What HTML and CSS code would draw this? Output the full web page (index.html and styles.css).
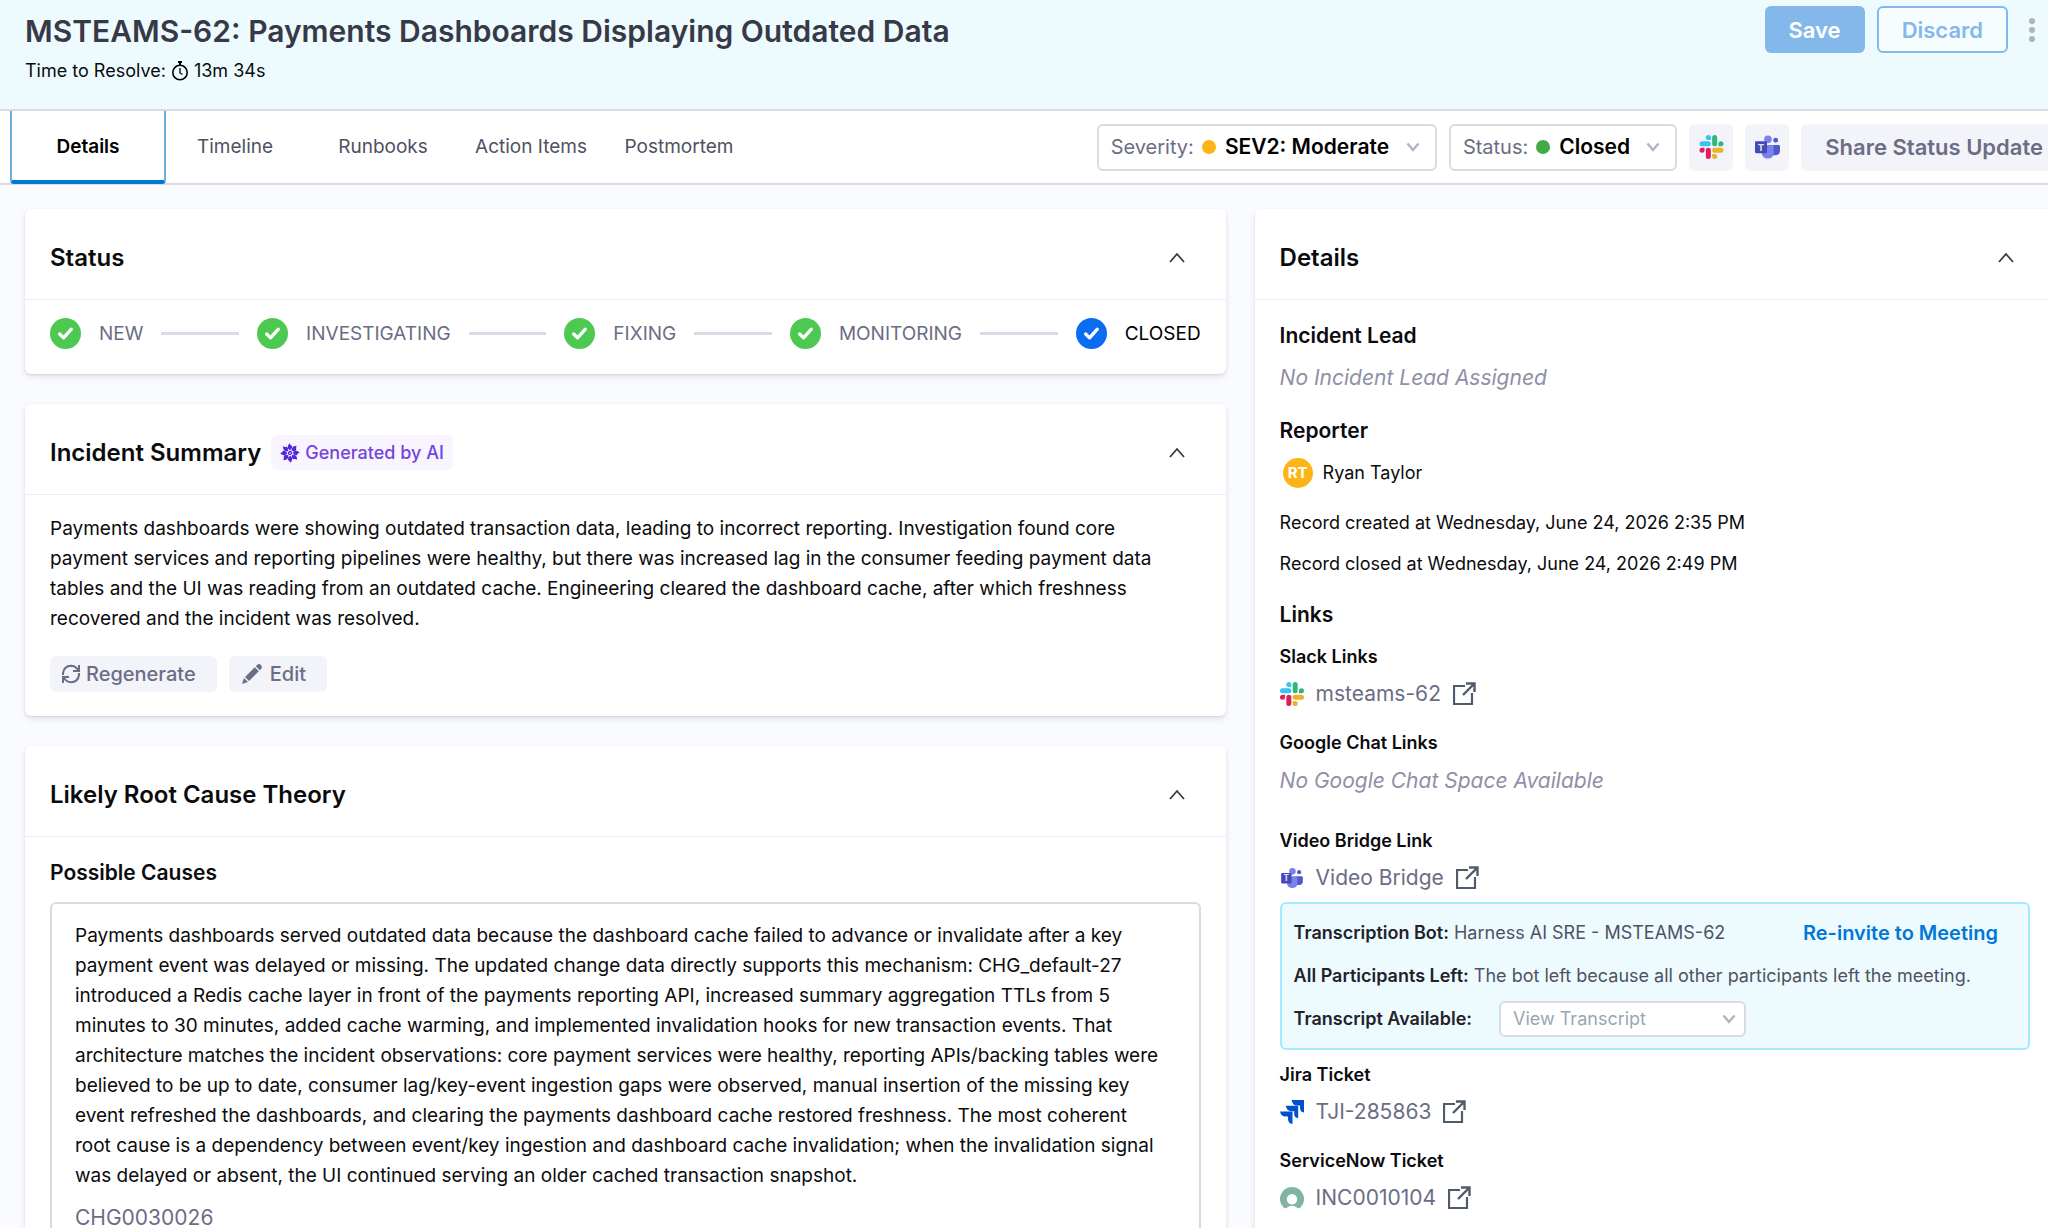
FILE: index.html
```html
<!DOCTYPE html>
<html lang="en">
  <head>
    <meta charset="utf-8" />
    <title>MSTEAMS-62: Payments Dashboards Displaying Outdated Data</title>
    <meta name="viewport" content="width=device-width, initial-scale=1.0" />
    <link rel="stylesheet" href="styles.css">
  </head>

  <body>
    <!-- shared icons -->
    <svg class="sprite" aria-hidden="true">
      <symbol id="chevron-up" viewBox="0 0 18 18">
        <path d="M2 13 9 5l7 8" fill="none" stroke="#383946" stroke-width="1.8" />
      </symbol>
      <symbol id="chevron-down" viewBox="0 0 16 16">
        <path d="M2.500 4.500 8 11l5.500-6.500" fill="none" stroke="#b0b1c4" stroke-width="2.400" />
      </symbol>
      <symbol id="check" viewBox="0 0 32 32">
        <circle cx="16" cy="16" r="16" fill="currentColor" />
        <path d="m10 16.500 4 4 8-9" fill="none" stroke="#fff" stroke-width="3.400" stroke-linecap="round" stroke-linejoin="round" />
      </symbol>
      <symbol id="external" viewBox="0 0 24 24">
        <path d="M12 4H1v18h18V11" fill="none" stroke="#4f5b6b" stroke-width="2.200" />
        <path d="M13 1.500h8.500V10M21 2 10 13" fill="none" stroke="#4f5b6b" stroke-width="2.400" />
      </symbol>
      <symbol id="slack" viewBox="0 0 24 24">
        <path fill="#e01e5a" d="M5.042 15.165a2.528 2.528 0 0 1-2.520 2.523A2.528 2.528 0 0 1 0 15.165a2.527 2.527 0 0 1 2.522-2.520h2.520v2.520zM6.313 15.165a2.527 2.527 0 0 1 2.521-2.520 2.527 2.527 0 0 1 2.521 2.520v6.313A2.528 2.528 0 0 1 8.834 24a2.528 2.528 0 0 1-2.521-2.522v-6.313z" />
        <path fill="#36c5f0" d="M8.834 5.042a2.528 2.528 0 0 1-2.521-2.520A2.528 2.528 0 0 1 8.834 0a2.528 2.528 0 0 1 2.521 2.522v2.520H8.834zM8.834 6.313a2.528 2.528 0 0 1 2.521 2.521 2.528 2.528 0 0 1-2.521 2.521H2.522A2.528 2.528 0 0 1 0 8.834a2.528 2.528 0 0 1 2.522-2.521h6.312z" />
        <path fill="#2eb67d" d="M18.956 8.834a2.528 2.528 0 0 1 2.522-2.521A2.528 2.528 0 0 1 24 8.834a2.528 2.528 0 0 1-2.522 2.521h-2.522V8.834zM17.688 8.834a2.528 2.528 0 0 1-2.523 2.521 2.527 2.527 0 0 1-2.520-2.521V2.522A2.527 2.527 0 0 1 15.165 0a2.528 2.528 0 0 1 2.523 2.522v6.312z" />
        <path fill="#ecb22e" d="M15.165 18.956a2.528 2.528 0 0 1 2.523 2.522A2.528 2.528 0 0 1 15.165 24a2.527 2.527 0 0 1-2.520-2.522v-2.522h2.520zM15.165 17.688a2.527 2.527 0 0 1-2.520-2.523 2.526 2.526 0 0 1 2.520-2.520h6.313A2.527 2.527 0 0 1 24 15.165a2.528 2.528 0 0 1-2.522 2.523h-6.313z" />
      </symbol>
      <symbol id="teams" viewBox="0 0 26 24">
        <circle cx="21.500" cy="5" r="2.500" fill="#5059c9" />
        <path d="M17 10h7.500q1.500 0 1.500 1.500V16q0 4.500-4.500 4.500H17z" fill="#5059c9" />
        <circle cx="13.500" cy="4" r="4" fill="#7b83eb" />
        <path d="M7 10h11q1.500 0 1.500 1.500V18q0 6-6.200 6T7 18z" fill="#7b83eb" />
        <rect y="6" width="12.500" height="12.500" rx="1.200" fill="#444ab5" />
        <text x="6.200" y="16" text-anchor="middle" font-family="Inter, sans-serif" font-size="10" font-weight="700" fill="#dfe1fa">T</text>
      </symbol>
      <symbol id="jira" viewBox="0 0 24 24">
        <path d="M11.500 0H24v12.500q-4-.5-4-4.500V5.500h-3q-4.500 0-5.500-5.500z" fill="#0052cc" />
        <path d="M5.800 5.800h12.400v12.400q-4-.5-4-4.500v-2.500h-3q-4.400 0-5.400-5.400z" fill="#0052cc" />
        <path d="M0 11.500h12.500V24q-4-.5-4.500-4.500V16.500H5.500Q1 16.500 0 11.500z" fill="#0052cc" />
      </symbol>
      <symbol id="servicenow" viewBox="0 0 24 24">
        <path d="M12 1a12 12 0 0 0-8.200 20.700 2 2 0 0 0 2.500.2 9.500 9.500 0 0 1 11.400 0 2 2 0 0 0 2.500-.2A12 12 0 0 0 12 1zm0 17.500a5.200 5.200 0 1 1 0-10.400 5.200 5.200 0 0 1 0 10.400z" fill="#81b5a1" />
      </symbol>
      <symbol id="blade" viewBox="0 0 20 20">
        <path d="M9.200 7.200Q6.200 3.600 9.600.2 10.200 2 12.400 3.600 12.200 5.600 10.400 6.800z" fill="#5426db" />
      </symbol>
    </svg>

    <header class="page-head">
      <div>
        <h1>MSTEAMS-62: Payments Dashboards Displaying Outdated Data</h1>
        <p class="resolve">
          Time to Resolve:
          <svg class="icon-clock" viewBox="0 0 18 20"><path d="M7 1h4M9 1v3" stroke="#000" stroke-width="2" /><circle cx="9" cy="11.500" r="7.200" fill="none" stroke="#000" stroke-width="1.600" /><path d="M9 7v5l2.500 1.500" fill="none" stroke="#000" stroke-width="1.300" /></svg>
          13m 34s
        </p>
      </div>
      <div class="head-actions">
        <button class="btn btn-primary">Save</button>
        <button class="btn btn-outline">Discard</button>
        <button class="btn-more" aria-label="More options">
          <svg viewBox="0 0 6 24"><circle cx="3" cy="3" r="3" /><circle cx="3" cy="12" r="3" /><circle cx="3" cy="21" r="3" /></svg>
        </button>
      </div>
    </header>

    <div class="toolbar">
      <nav class="tabs">
        <a href="#details" class="tab active">Details</a>
        <a href="#timeline" class="tab">Timeline</a>
        <a href="#runbooks" class="tab">Runbooks</a>
        <a href="#action-items" class="tab">Action Items</a>
        <a href="#postmortem" class="tab">Postmortem</a>
      </nav>
      <div class="controls">
        <div class="picker">
          <label for="severity">Severity:</label>
          <span class="dot dot-moderate"></span>
          <select id="severity"><option>SEV2: Moderate</option></select>
          <svg class="caret"><use href="#chevron-down" /></svg>
        </div>
        <div class="picker">
          <label for="status">Status:</label>
          <span class="dot dot-closed"></span>
          <select id="status"><option>Closed</option></select>
          <svg class="caret"><use href="#chevron-down" /></svg>
        </div>
        <button class="btn-icon" aria-label="Slack"><svg><use href="#slack" /></svg></button>
        <button class="btn-icon" aria-label="Teams"><svg><use href="#teams" /></svg></button>
        <button class="btn btn-share">Share Status Update</button>
      </div>
    </div>

    <main class="columns">
      <div class="main-column">
        <section class="card">
          <div class="card-head">
            <h2>Status</h2>
            <button class="toggle" aria-label="Collapse"><svg><use href="#chevron-up" /></svg></button>
          </div>
          <ol class="steps">
            <li><svg class="done"><use href="#check" /></svg>NEW</li>
            <li class="line"></li>
            <li><svg class="done"><use href="#check" /></svg>INVESTIGATING</li>
            <li class="line"></li>
            <li><svg class="done"><use href="#check" /></svg>FIXING</li>
            <li class="line"></li>
            <li><svg class="done"><use href="#check" /></svg>MONITORING</li>
            <li class="line"></li>
            <li class="current"><svg><use href="#check" /></svg>CLOSED</li>
          </ol>
        </section>

        <section class="card">
          <div class="card-head">
            <h2>Incident Summary</h2>
            <span class="ai-badge">
              <svg viewBox="0 0 20 20">
                <circle cx="10" cy="10" r="1.500" fill="none" stroke="#5426db" stroke-width="1.300" />
                <use href="#blade" width="20" height="20" />
                <use href="#blade" width="20" height="20" transform="rotate(45 10 10)" />
                <use href="#blade" width="20" height="20" transform="rotate(90 10 10)" />
                <use href="#blade" width="20" height="20" transform="rotate(135 10 10)" />
                <use href="#blade" width="20" height="20" transform="rotate(180 10 10)" />
                <use href="#blade" width="20" height="20" transform="rotate(225 10 10)" />
                <use href="#blade" width="20" height="20" transform="rotate(270 10 10)" />
                <use href="#blade" width="20" height="20" transform="rotate(315 10 10)" />
              </svg>
              Generated by AI
            </span>
            <button class="toggle" aria-label="Collapse"><svg><use href="#chevron-up" /></svg></button>
          </div>
          <div class="card-body summary">
            <p class="prose">Payments dashboards were showing outdated transaction data, leading to incorrect reporting. Investigation found core payment services and reporting pipelines were healthy, but there was increased lag in the consumer feeding payment data tables and the UI was reading from an outdated cache. Engineering cleared the dashboard cache, after which freshness recovered and the incident was resolved.</p>
            <div class="summary-actions">
              <button class="btn-small">
                <svg viewBox="0 0 20 20" fill="none" stroke="currentColor" stroke-width="2"><path d="M2 11V9q1-7 8-7.200 4.500 0 7.500 4.700M18 1v6h-6M18 9v2q-1 7-8 7.200-4.500 0-7.500-4.700M2 19v-6h6" /></svg>
                Regenerate
              </button>
              <button class="btn-small btn-edit">
                <svg viewBox="0 0 20 20" fill="currentColor"><path d="M0 20l2-6 4 4zM3 13 12.800 3.200l4 4L7 17zM13.800 2.200 15.500.6q1.700-1.200 3.200.2t.8 3.600l-1.700 1.800z" /></svg>
                Edit
              </button>
            </div>
          </div>
        </section>

        <section class="card">
          <div class="card-head">
            <h2>Likely Root Cause Theory</h2>
            <button class="toggle" aria-label="Collapse"><svg><use href="#chevron-up" /></svg></button>
          </div>
          <div class="card-body">
            <h3>Possible Causes</h3>
            <div class="cause">
              <p class="prose">Payments dashboards served outdated data because the dashboard cache failed to advance or invalidate after a key payment event was delayed or missing. The updated change data directly supports this mechanism: CHG_default-27 introduced a Redis cache layer in front of the payments reporting API, increased summary aggregation TTLs from 5 minutes to 30 minutes, added cache warming, and implemented invalidation hooks for new transaction events. That architecture matches the incident observations: core payment services were healthy, reporting APIs/backing tables were believed to be up to date, consumer lag/key-event ingestion gaps were observed, manual insertion of the missing key event refreshed the dashboards, and clearing the payments dashboard cache restored freshness. The most coherent root cause is a dependency between event/key ingestion and dashboard cache invalidation; when the invalidation signal was delayed or absent, the UI continued serving an older cached transaction snapshot.</p>
              <a href="#change" class="change">CHG0030026</a>
            </div>
          </div>
        </section>
      </div>

      <aside class="card">
        <div class="card-head">
          <h2>Details</h2>
          <button class="toggle" aria-label="Collapse"><svg><use href="#chevron-up" /></svg></button>
        </div>
        <div class="card-body">
          <div class="field">
            <h3>Incident Lead</h3>
            <p class="empty">No Incident Lead Assigned</p>
          </div>
          <div class="field">
            <h3>Reporter</h3>
            <p class="person"><span class="avatar">RT</span>Ryan Taylor</p>
          </div>
          <div class="records">
            <p>Record created at Wednesday, June 24, 2026 2:35 PM</p>
            <p>Record closed at Wednesday, June 24, 2026 2:49 PM</p>
          </div>
          <h3 class="links-title">Links</h3>
          <div class="link-group">
            <h4>Slack Links</h4>
            <a href="#slack-channel" class="ext"><svg><use href="#slack" /></svg>msteams-62<svg><use href="#external" /></svg></a>
          </div>
          <div class="link-group chat">
            <h4>Google Chat Links</h4>
            <p class="empty">No Google Chat Space Available</p>
          </div>
          <div class="link-group bridge">
            <h4>Video Bridge Link</h4>
            <a href="#bridge" class="ext"><svg class="small"><use href="#teams" /></svg>Video Bridge<svg><use href="#external" /></svg></a>
            <div class="bot">
              <div class="bot-row">
                <p><b>Transcription Bot:</b> Harness AI SRE - MSTEAMS-62</p>
                <button class="btn-link">Re-invite to Meeting</button>
              </div>
              <p class="bot-row"><span><b>All Participants Left:</b> The bot left because all other participants left the meeting.</span></p>
              <div class="bot-row transcript">
                <label for="transcript">Transcript Available:</label>
                <div class="transcript-picker">
                  <select id="transcript"><option>View Transcript</option></select>
                  <svg class="caret"><use href="#chevron-down" /></svg>
                </div>
              </div>
            </div>
          </div>
          <div class="link-group">
            <h4>Jira Ticket</h4>
            <a href="#jira-ticket" class="ext"><svg><use href="#jira" /></svg>TJI-285863<svg><use href="#external" /></svg></a>
          </div>
          <div class="link-group">
            <h4>ServiceNow Ticket</h4>
            <a href="#servicenow-ticket" class="ext"><svg><use href="#servicenow" /></svg>INC0010104<svg><use href="#external" /></svg></a>
          </div>
        </div>
      </aside>
    </main>
  </body>
</html>
```

FILE: styles.css
```css
* {
  box-sizing: border-box;
}
html {
  height: 100%;
  overflow: hidden;
}
body {
  margin: 0;
  height: 100%;
  overflow: hidden;
  background: #fafbff;
  color: #0b0b0d;
  font-family: Inter, 'Liberation Sans', sans-serif;
  font-size: 18px;
  line-height: 24px;
}
h1, h2, h3, h4, p, ol {
  margin: 0;
  padding: 0;
}
a {
  color: inherit;
  text-decoration: none;
}
button,
select {
  font: inherit;
  color: inherit;
  border: none;
  background: none;
  padding: 0;
  margin: 0;
}
select {
  appearance: none;
}
svg {
  display: block;
  flex: none;
}
.sprite {
  display: none;
}

/* header */
.page-head {
  display: flex;
  justify-content: space-between;
  height: 111px;
  padding: 6px 5px 0 25px;
  background: #edfbff;
  border-bottom: 2px solid #d9dae5;
}
h1 {
  padding-top: 6px;
  font-size: 30px;
  line-height: 38px;
  font-weight: 600;
  color: #383946;
}
.resolve {
  display: flex;
  align-items: center;
  gap: 5px;
  padding-top: 9px;
}
.icon-clock {
  width: 18px;
  height: 20px;
}
.head-actions {
  display: flex;
  gap: 12px;
  height: 47px;
}
.btn {
  padding: 0 24px;
  border-radius: 6px;
  font-size: 22px;
  font-weight: 600;
  white-space: nowrap;
}
.btn-primary {
  background: #85b8ea;
  color: #fff;
}
.btn-outline {
  padding: 0 23px;
  border: 2px solid #85b8ea;
  background: #f6fdff;
  color: #85b8ea;
}
.btn-more {
  padding: 0 8px 0 9px;
}
.btn-more svg {
  width: 6px;
  height: 24px;
  fill: #b0b1c4;
}

/* tabs and pickers */
.toolbar {
  display: flex;
  justify-content: space-between;
  height: 74px;
  padding-left: 10px;
  background: #fff;
  border-bottom: 2px solid #d9dae5;
}
.tabs {
  display: flex;
}
.tab {
  width: 148px;
  display: flex;
  align-items: center;
  justify-content: center;
  font-size: 19px;
  color: #4f5162;
}
.tab.active {
  width: 156px;
  margin-right: -5px;
  border: 2px solid #6cafdf;
  border-top: none;
  border-bottom: 4px solid #0278d5;
  margin-bottom: -1px;
  padding-top: 3px;
  border-radius: 0 0 4px 4px;
  font-weight: 600;
  color: #000;
}
.controls {
  display: flex;
  flex: none;
  align-items: center;
  gap: 12px;
  height: 72px;
  margin-right: -19px;
}
.picker {
  display: flex;
  align-items: center;
  height: 47px;
  padding: 0 14px 0 12px;
  border: 2px solid #d9dae5;
  border-radius: 6px;
  font-size: 20px;
  color: #6b6d85;
}
.picker select {
  font-size: 21px;
  font-weight: 600;
  color: #000;
  margin: 0 15px 0 9px;
}
.dot {
  width: 14px;
  height: 14px;
  margin-left: 8px;
  border-radius: 50%;
}
.dot-moderate {
  background: #fcb519;
}
.dot-closed {
  background: #42ab45;
}
.caret {
  width: 16px;
  height: 16px;
}
.btn-icon {
  display: grid;
  place-items: center;
  width: 44px;
  height: 47px;
  border-radius: 6px;
  background: #f3f3fa;
}
.btn-icon svg {
  width: 25px;
  height: 24px;
}
.btn-share {
  height: 47px;
  background: #f3f3fa;
  color: #6b6d85;
}

/* cards */
.columns {
  display: grid;
  grid-template-columns: 3fr 2fr;
  gap: 29px;
  padding: 24px 0 0 25px;
  margin-right: -7px;
}
.main-column {
  display: grid;
  align-content: start;
  gap: 30px;
}
.card {
  background: #fff;
  border-radius: 6px;
  box-shadow: 0 1px 2px rgba(40, 41, 61, 0.1), 0 3px 6px rgba(96, 97, 112, 0.14);
}
.card-head {
  display: flex;
  align-items: center;
  gap: 10px;
  height: 91px;
  padding: 7px 40px 0 25px;
  border-bottom: 1px solid #eeeff6;
}
h2 {
  font-size: 24px;
  line-height: 30px;
  font-weight: 600;
}
.toggle {
  margin-left: auto;
}
.toggle svg {
  width: 18px;
  height: 18px;
}
.card-body {
  padding: 24px 25px;
}
h3 {
  font-size: 21px;
  font-weight: 600;
}
h4 {
  font-size: 18px;
  font-weight: 600;
}
.steps {
  display: flex;
  align-items: center;
  gap: 18px;
  padding: 18px 25px 25px;
  list-style: none;
  font-size: 19px;
  color: #6b6d85;
}
.steps li {
  display: flex;
  align-items: center;
  gap: 18px;
}
.steps svg {
  width: 31px;
  height: 31px;
  color: #0a6cf1;
}
.steps .done {
  color: #4dc952;
}
.steps .line {
  flex: 1;
  height: 3px;
  background: #d9dae5;
}
.steps .current {
  color: #000;
}
.ai-badge {
  display: flex;
  align-items: center;
  gap: 5px;
  height: 35px;
  padding: 0 9px;
  border-radius: 6px;
  background: #f8f5ff;
  color: #7444dc;
  font-weight: 500;
}
.ai-badge svg {
  width: 20px;
  height: 20px;
}
.prose {
  padding-right: 14px;
  font-size: 19px;
  line-height: 30px;
}
.summary {
  padding-top: 19px;
}
.summary-actions {
  display: flex;
  gap: 12px;
  padding-top: 22px;
}
.btn-small {
  display: flex;
  align-items: center;
  gap: 5px;
  height: 36px;
  padding: 0 21px 0 11px;
  border-radius: 6px;
  background: #f3f3fa;
  color: #6b6d85;
  font-size: 20px;
  font-weight: 500;
}
.btn-small svg {
  width: 20px;
  height: 20px;
}
.btn-edit {
  gap: 8px;
  padding-left: 13px;
}
.cause {
  margin-top: 17px;
  padding: 17px 23px;
  border: 2px solid #d9dae5;
  border-radius: 6px;
}
.change {
  display: block;
  margin-top: 12px;
  font-size: 21px;
  line-height: 30px;
  color: #6b6d85;
}

/* details column */
.field {
  margin-bottom: 29px;
}
.empty {
  margin-top: 18px;
  font-size: 21px;
  font-style: italic;
  color: #8f90a6;
}
.person {
  display: flex;
  align-items: center;
  gap: 10px;
  margin: 15px 0 0 3px;
}
.avatar {
  width: 30px;
  height: 30px;
  border-radius: 50%;
  background: #fcb519;
  color: #fff;
  font-size: 15px;
  line-height: 30px;
  font-weight: 700;
  text-align: center;
}
.field + .records {
  margin-top: -6px;
}
.records {
  display: grid;
  gap: 17px;
}
.links-title {
  margin: 27px 0 18px;
}
.link-group {
  margin-bottom: 25px;
}
.chat {
  margin-bottom: 36px;
}
.chat .empty {
  margin-top: 14px;
}
.bridge {
  margin-bottom: 13px;
}
.ext {
  display: flex;
  align-items: center;
  gap: 12px;
  margin-top: 13px;
  font-size: 21px;
  color: #6b6d85;
}
.ext svg {
  width: 24px;
  height: 24px;
}
.ext .small {
  height: 20px;
}
.bot {
  display: grid;
  gap: 7px;
  margin-top: 12px;
  padding: 11px 12px;
  border: 2px solid #a3e9ff;
  border-radius: 6px;
  background: #edfbff;
  color: #4f5162;
}
.bot-row {
  display: flex;
  align-items: center;
  justify-content: space-between;
  height: 36px;
}
.bot b,
.bot label {
  font-weight: 600;
  color: #22222a;
}
.btn-link {
  padding: 0 18px;
  font-size: 20px;
  font-weight: 600;
  color: #0278d5;
}
.transcript {
  justify-content: start;
  gap: 27px;
}
.transcript-picker {
  display: flex;
  align-items: center;
  width: 247px;
  height: 36px;
  padding: 0 7px 0 12px;
  border: 2px solid #d9dae5;
  border-radius: 6px;
  background: #fff;
}
.transcript-picker select {
  flex: 1;
  color: #9aa5b5;
}
```
